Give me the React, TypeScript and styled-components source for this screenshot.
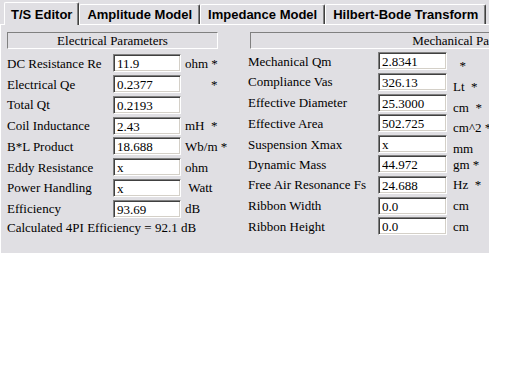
import React from "react"
import styled, {createGlobalStyle} from "styled-components";

const GlobalStyle = createGlobalStyle`
  body {
    margin: 0;
    background: #ffffff;
  }
`

const face = "#e0dfe3"
const serif = `"Liberation Serif", "Times New Roman", serif`

const StyledWindow = styled.div`
  width: 489px;
  height: 253px;
  background-color: ${face};
  display: flex;
  flex-direction: column;
  overflow: hidden;
`

const StyledTabBar = styled.div`
  height: 24px;
  display: flex;
  align-items: flex-end;
  padding-left: 4px;
  position: relative;
  z-index: 1;
`

const StyledTab = styled.div<{
    active?: boolean,
}>`
  height: ${props => props.active ? 23 : 20}px;
  margin-bottom: ${props => props.active ? -1 : 0}px;
  padding: 0 ${props => props.active ? 6 : 7}px;
  padding-bottom: ${props => props.active ? 0 : 2}px;
  display: flex;
  align-items: ${props => props.active ? "center" : "flex-end"};
  box-sizing: border-box;
  background-color: ${face};
  border-top: 1px solid #ffffff;
  border-left: 1px solid #ffffff;
  border-right: 1px solid #404040;
  box-shadow: inset -1px 0 0 #808080;
  border-top-left-radius: 2px;
  border-top-right-radius: 2px;
  font-family: "Liberation Sans", Arial, sans-serif;
  font-weight: bold;
  font-size: 13px;
  color: #000000;
  white-space: nowrap;
`

const StyledContent = styled.div`
  flex: 1;
  display: flex;
  border-top: 1px solid #ffffff;
  border-left: 1px solid #ffffff;
  padding-left: 6px;
  overflow: hidden;
  font-family: ${serif};
  font-size: 13px;
  color: #000000;
`

const StyledColumn = styled.div<{
    width?: number,
}>`
  ${props => props.width ? `width: ${props.width}px; flex: none;` : "flex: 1;"}
  display: flex;
  flex-direction: column;
  min-width: 0;
`

const StyledGroupTitle = styled.div<{
    width: number,
    offset: number,
}>`
  flex: none;
  width: ${props => props.width}px;
  height: 17px;
  margin: 7px 0 0 ${props => props.offset}px;
  box-sizing: border-box;
  border: 1px solid;
  border-color: #808080 #ffffff #ffffff #808080;
  display: flex;
  align-items: center;
  justify-content: center;
  white-space: nowrap;
  line-height: 1;
`

const StyledRows = styled.div<{
    gap: number,
}>`
  margin-top: ${props => props.gap}px;
  display: flex;
  flex-direction: column;
`

const StyledRow = styled.div<{
    labelWidth: number,
    inputWidth: number,
}>`
  height: 20.75px;
  display: grid;
  grid-template-columns: ${props => props.labelWidth}px ${props => props.inputWidth}px 1fr;
  align-items: center;
  white-space: nowrap;
`

const StyledLabel = styled.span`
  line-height: 1;
`

const StyledInput = styled.input`
  width: 100%;
  height: 18px;
  box-sizing: border-box;
  margin: 0;
  padding: 2px 0 0 3px;
  border: 1px solid;
  border-color: #808080 #ffffff #ffffff #808080;
  box-shadow: inset 1px 1px 0 #404040, inset -1px -1px 0 #d4d0c8;
  background-color: #ffffff;
  font-family: ${serif};
  font-size: 13px;
  color: #000000;
  outline: none;
`

const StyledUnit = styled.span<{
    gap: number,
    low?: boolean,
}>`
  margin-left: ${props => props.gap}px;
  padding-top: ${props => props.low ? 9 : 0}px;
  line-height: 1;
`

const StyledNote = styled.div`
  height: 18px;
  display: flex;
  align-items: center;
  white-space: nowrap;
`

type Field = {
    label: string,
    value: string,
    unit: string,
    low?: boolean,
}

const nb = (n: number) => "\u00a0".repeat(n)

const electrical: Field[] = [
    {label: "DC Resistance Re", value: "11.9", unit: "ohm *"},
    {label: "Electrical Qe", value: "0.2377", unit: nb(8) + "*"},
    {label: "Total Qt", value: "0.2193", unit: ""},
    {label: "Coil Inductance", value: "2.43", unit: "mH" + nb(2) + "*"},
    {label: "B*L Product", value: "18.688", unit: "Wb/m *"},
    {label: "Eddy Resistance", value: "x", unit: "ohm"},
    {label: "Power Handling", value: "x", unit: nb(1) + "Watt"},
    {label: "Efficiency", value: "93.69", unit: "dB"},
]

const mechanical: Field[] = [
    {label: "Mechanical Qm", value: "2.8341", unit: nb(2) + "*", low: true},
    {label: "Compliance Vas", value: "326.13", unit: "Lt" + nb(2) + "*", low: true},
    {label: "Effective Diameter", value: "25.3000", unit: "cm" + nb(2) + "*", low: true},
    {label: "Effective Area", value: "502.725", unit: "cm^2 *", low: true},
    {label: "Suspension Xmax", value: "x", unit: "mm", low: true},
    {label: "Dynamic Mass", value: "44.972", unit: "gm *"},
    {label: "Free Air Resonance Fs", value: "24.688", unit: "Hz" + nb(2) + "*"},
    {label: "Ribbon Width", value: "0.0", unit: "cm"},
    {label: "Ribbon Height", value: "0.0", unit: "cm"},
]

const FieldRows: React.FC<{
    fields: Field[],
    labelWidth: number,
    inputWidth: number,
    unitGap: number,
}> = ({fields, labelWidth, inputWidth, unitGap}) => (
    <>
        {fields.map(field => (
            <StyledRow key={field.label} labelWidth={labelWidth} inputWidth={inputWidth}>
                <StyledLabel>{field.label}</StyledLabel>
                <StyledInput defaultValue={field.value} readOnly/>
                <StyledUnit gap={unitGap} low={field.low}>{field.unit}</StyledUnit>
            </StyledRow>
        ))}
    </>
)

const tabs = ["T/S Editor", "Amplitude Model", "Impedance Model", "Hilbert-Bode Transform"]

export default function App() {
    return (
        <>
            <GlobalStyle/>
            <StyledWindow>
                <StyledTabBar>
                    {tabs.map((tab, i) => (
                        <StyledTab key={tab} active={i === 0}>{tab}</StyledTab>
                    ))}
                </StyledTabBar>
                <StyledContent>
                    <StyledColumn width={241}>
                        <StyledGroupTitle width={211} offset={0}>Electrical Parameters</StyledGroupTitle>
                        <StyledRows gap={4}>
                            <FieldRows fields={electrical} labelWidth={106} inputWidth={68} unitGap={4}/>
                            <StyledNote>Calculated 4PI Efficiency = 92.1 dB</StyledNote>
                        </StyledRows>
                    </StyledColumn>
                    <StyledColumn>
                        <StyledGroupTitle width={446} offset={2}>Mechanical Parameters</StyledGroupTitle>
                        <StyledRows gap={1}>
                            <FieldRows fields={mechanical} labelWidth={130} inputWidth={69} unitGap={6}/>
                        </StyledRows>
                    </StyledColumn>
                </StyledContent>
            </StyledWindow>
        </>
    )
}
